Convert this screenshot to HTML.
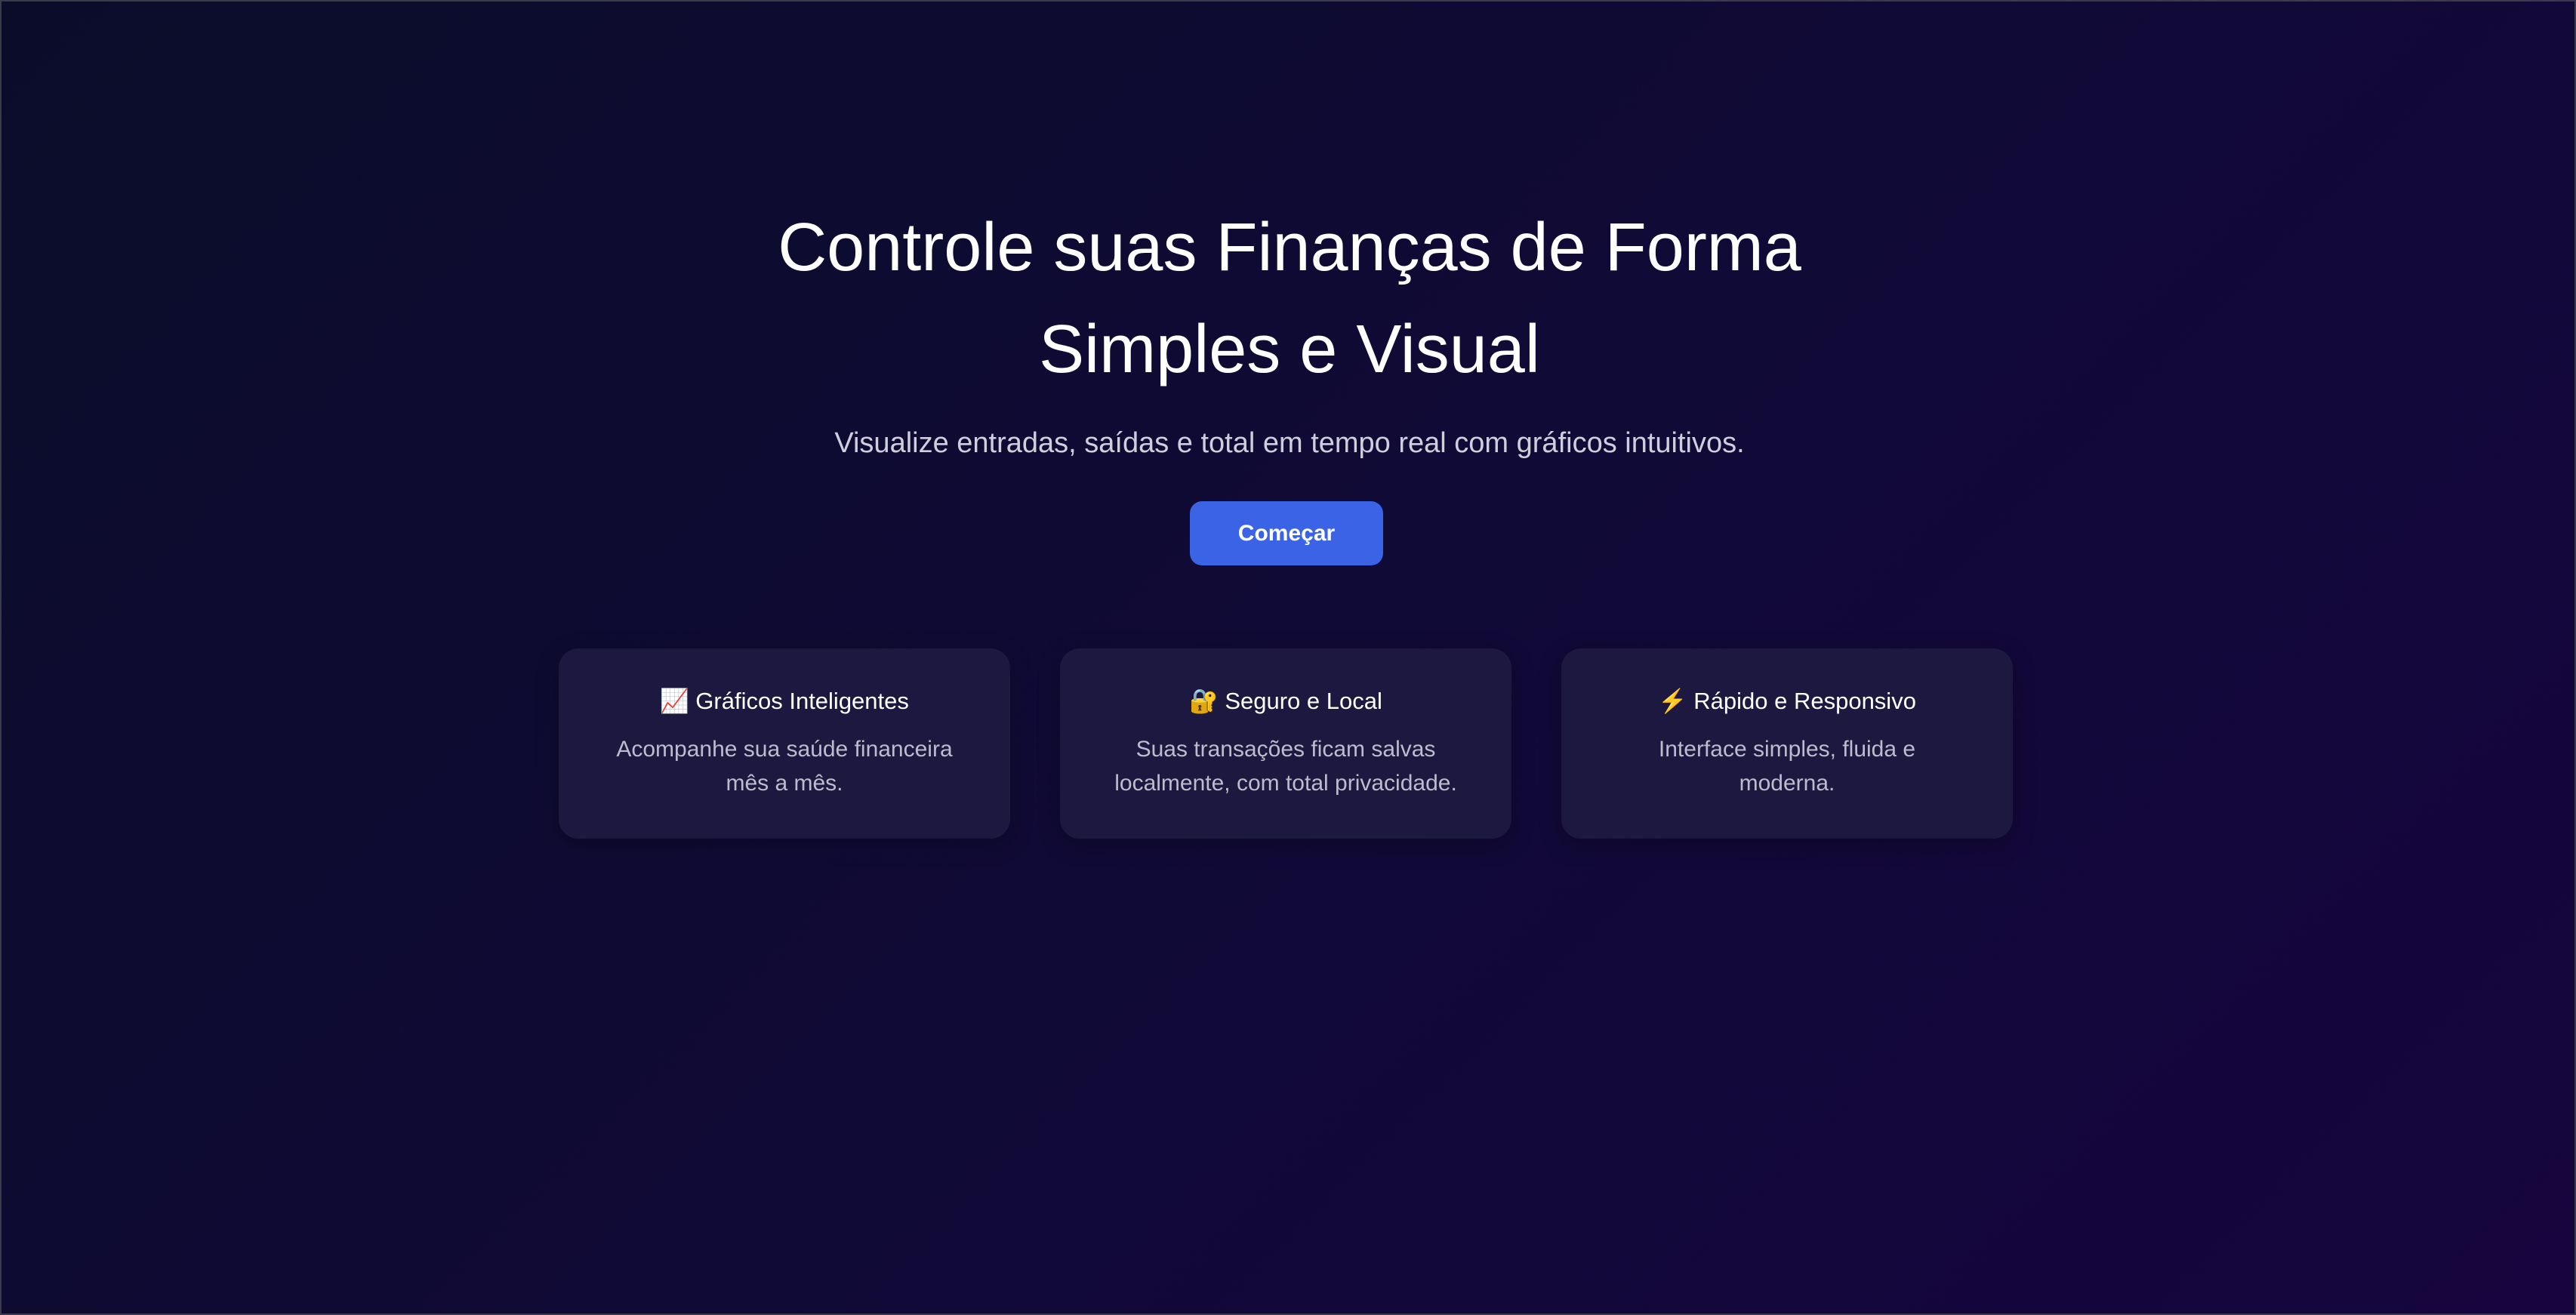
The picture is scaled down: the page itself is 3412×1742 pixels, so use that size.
<!DOCTYPE html>
<html><head><meta charset="utf-8"><style>
html,body{margin:0;padding:0;}
body{width:3412px;height:1742px;overflow:hidden;position:relative;
background:linear-gradient(135deg,#0b0c2a 0%,#100a36 50%,#16053f 100%);
font-family:"Liberation Sans",Arial,sans-serif;color:#fff;box-sizing:border-box;border:2px solid #3a3a48;}
.t{position:absolute;left:0;width:3412px;text-align:center;white-space:nowrap;}
h1{margin:0;font-weight:400;font-size:90px;}
.btn{position:absolute;left:1574px;top:662px;width:256px;height:85px;background:#3a63e6;border-radius:16px;
font-weight:700;font-size:30px;line-height:85px;text-align:center;}
.card{position:absolute;top:857px;width:598px;height:252px;background:#1c1840;border-radius:26px;text-align:center;
box-shadow:0 8px 30px rgba(0,0,0,0.25);}
.card h3{margin:0;position:absolute;left:0;right:0;font-weight:400;font-size:31px;line-height:44px;}
.card p{margin:0;position:absolute;left:30px;right:30px;color:#bdbccc;font-size:30px;line-height:45px;}
</style></head><body>
<h1 class="t" style="top:259px;line-height:135px;">Controle suas Finanças de Forma<br>Simples e Visual</h1>
<div class="t" style="top:563px;font-size:38px;line-height:45px;color:#cfcfdc;">Visualize entradas, saídas e total em tempo real com gráficos intuitivos.</div>
<div class="btn">Começar</div>

<div class="card" style="left:738px;"><h3 style="top:48px;">📈 Gráficos Inteligentes</h3><p style="top:111px;">Acompanhe sua saúde financeira<br>mês a mês.</p></div>
<div class="card" style="left:1402px;"><h3 style="top:48px;">🔐 Seguro e Local</h3><p style="top:111px;">Suas transações ficam salvas<br>localmente, com total privacidade.</p></div>
<div class="card" style="left:2066px;"><h3 style="top:48px;">⚡ Rápido e Responsivo</h3><p style="top:111px;">Interface simples, fluida e<br>moderna.</p></div>
</body></html>
